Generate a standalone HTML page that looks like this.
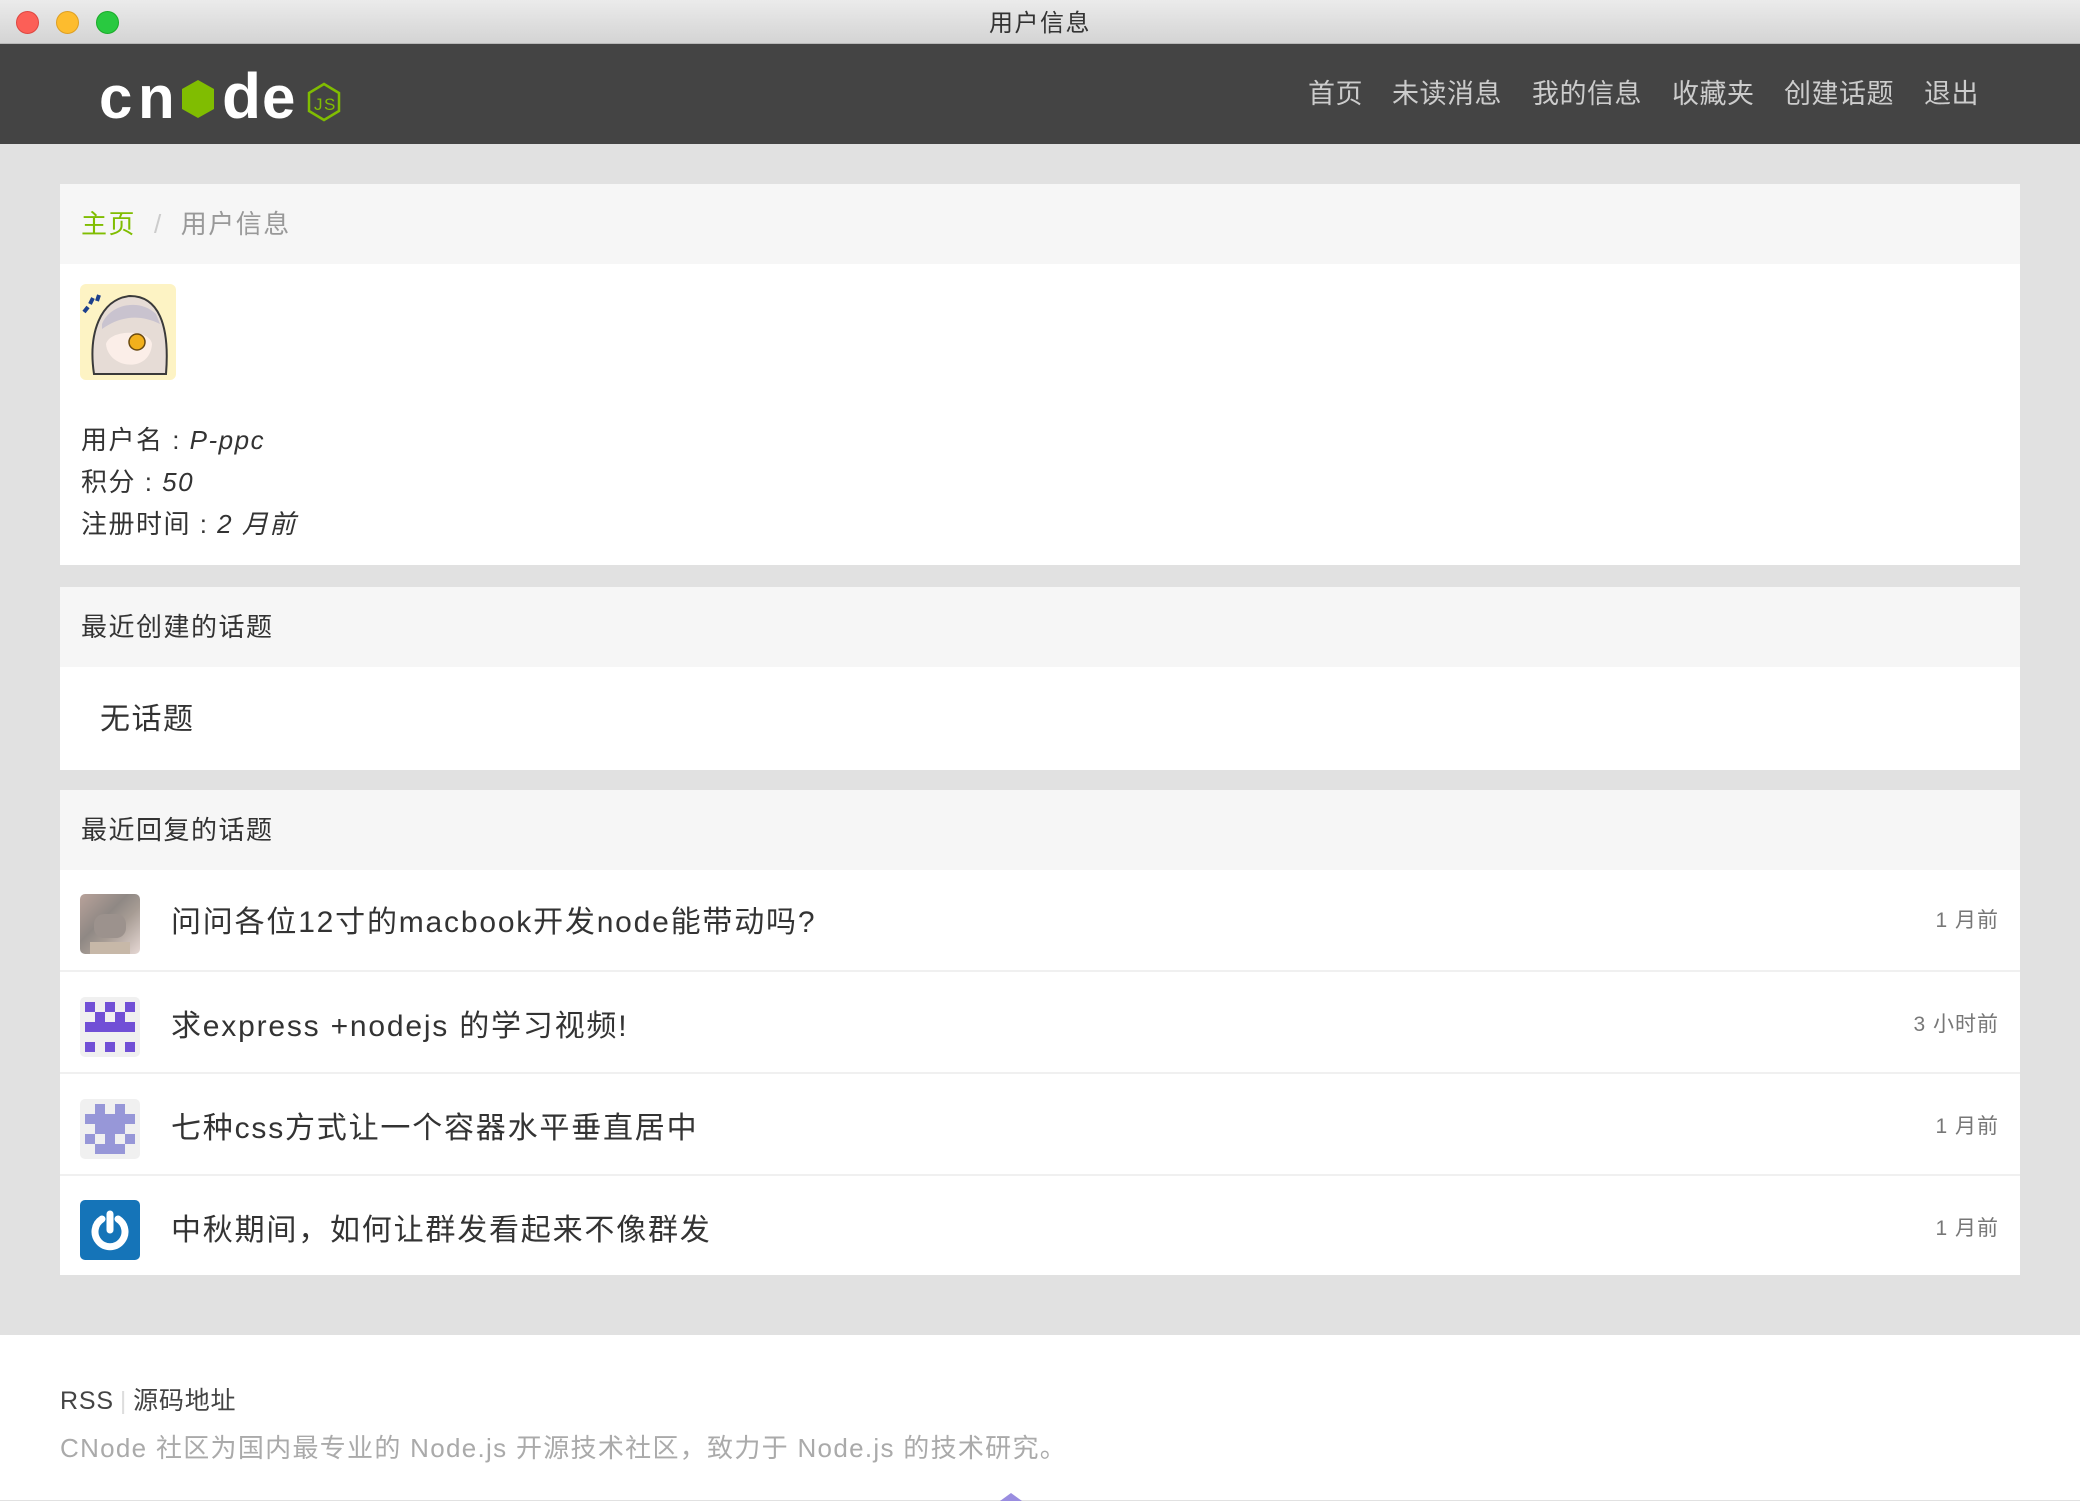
<!DOCTYPE html>
<html><head><meta charset="utf-8">
<style>
*{margin:0;padding:0;box-sizing:border-box}
body{width:2080px;height:1500px;background:#e1e1e1;font-family:"Liberation Sans","Noto Sans CJK SC",sans-serif;color:#333;position:relative;overflow:hidden;letter-spacing:1.5px}
.abs{position:absolute}
.tb{left:0;top:0;width:2080px;height:44px;background:linear-gradient(#ebebeb,#d4d4d4);border-bottom:1px solid #b8b8b8}
.dot{top:11px;width:23px;height:23px;border-radius:50%}
.hdr{left:0;top:44px;width:2080px;height:100px;background:#444}
.nav{top:74px;font-size:27px;color:#ccc;line-height:40px;white-space:nowrap;letter-spacing:0.5px}
.panel{left:60px;width:1960px;background:#fff}
.ph{left:0;top:0;width:100%;height:80px;background:#f6f6f6;font-size:26px;line-height:80px;padding-left:21px}
.row{left:0;width:100%;height:102px;border-top:2px solid #f0f0f0}
.row .t{left:111px;top:5px;line-height:100px;font-size:30px;color:#333;white-space:nowrap;letter-spacing:1.8px}
.row .tm{right:21px;top:3px;line-height:100px;font-size:21px;color:#777;letter-spacing:1px}
.av{left:20px;top:22px;width:60px;height:60px;border-radius:5px;overflow:hidden}
.c{position:absolute;width:10px;height:10px}
</style></head><body>
<div class="abs tb"></div>
<div class="abs dot" style="left:16px;background:#fc5f57;border:1px solid #de4640"></div>
<div class="abs dot" style="left:56px;background:#fdbc2e;border:1px solid #de9f22"></div>
<div class="abs dot" style="left:96px;background:#29c940;border:1px solid #1aab29"></div>
<div class="abs" style="left:0;top:2px;width:2080px;text-align:center;line-height:44px;font-size:24px;color:#333">用户信息</div>

<div class="abs hdr"></div>
<svg class="abs" style="left:96px;top:58px" width="252" height="70" viewBox="0 0 252 70">
  <text x="3" y="60" font-family="Liberation Sans" font-weight="bold" font-size="60" fill="#fff">c</text>
  <text x="42" y="60" font-family="Liberation Sans" font-weight="bold" font-size="60" fill="#fff">n</text>
  <polygon points="102,22 118,31 118,51 102,60 86,51 86,31" fill="#80bd01"/>
  <text x="126" y="60" font-family="Liberation Sans" font-weight="bold" font-size="64" fill="#fff">d</text>
  <text x="166" y="60" font-family="Liberation Sans" font-weight="bold" font-size="60" fill="#fff">e</text>
  <polygon points="228,26 243,35 243,53 228,62 213,53 213,35" fill="none" stroke="#80bd01" stroke-width="2.5"/>
  <text x="218" y="52" font-family="Liberation Sans" font-size="17" fill="#80bd01">JS</text>
</svg>
<div class="abs nav" style="left:1308px">首页</div>
<div class="abs nav" style="left:1392px">未读消息</div>
<div class="abs nav" style="left:1532px">我的信息</div>
<div class="abs nav" style="left:1672px">收藏夹</div>
<div class="abs nav" style="left:1784px">创建话题</div>
<div class="abs nav" style="left:1924px">退出</div>

<div class="abs panel" style="top:184px;height:381px">
  <div class="abs ph"><span style="color:#80bd01">主页</span><span style="color:#ccc;padding:0 18px">/</span><span style="color:#999">用户信息</span></div>
  <svg class="abs" style="left:20px;top:100px" width="96" height="96" viewBox="0 0 96 96">
    <rect width="96" height="96" rx="6" fill="#fdf3c4"/>
    <path d="M14 90 C8 50 20 15 50 12 C78 12 90 40 86 90 Z" fill="#e6dcd6" stroke="#3a3a3a" stroke-width="2"/>
    <path d="M22 40 C30 20 60 14 76 30 L80 40 C60 30 40 32 22 45Z" fill="#c9c3cf"/>
    <path d="M26 60 C28 85 70 90 72 60 C70 45 30 45 26 60Z" fill="#fbeee8"/>
    <circle cx="57" cy="58" r="8" fill="#f2b01c" stroke="#6a4a10" stroke-width="1.5"/>
    <path d="M4 28 l4 -5 M10 20 l3 -6 M17 17 l2 -6" stroke="#1c3f8c" stroke-width="4"/>
  </svg>
  <div class="abs" style="left:21px;top:235px;font-size:26px;line-height:42px">用户名 : <i>P-ppc</i><br>积分 : <i>50</i><br>注册时间 : <i>2 月前</i></div>
</div>

<div class="abs panel" style="top:587px;height:183px">
  <div class="abs ph">最近创建的话题</div>
  <div class="abs" style="left:40px;top:82px;line-height:102px;font-size:30px">无话题</div>
</div>

<div class="abs panel" style="top:790px;height:485px">
  <div class="abs ph">最近回复的话题</div>
  <div class="abs row" style="top:78px;border-top:none">
    <div class="abs av" style="top:26px;background:linear-gradient(135deg,#b8a29a,#8f8884 40%,#a79c94 60%,#e6d8d4)">
      <div class="c" style="left:14px;top:20px;width:32px;height:24px;border-radius:10px;background:#9c928d"></div>
      <div class="c" style="left:10px;top:48px;width:40px;height:12px;background:#c7b8a8"></div>
    </div>
    <div class="abs t">问问各位12寸的macbook开发node能带动吗?</div><div class="abs tm">1 月前</div>
  </div>
  <div class="abs row" style="top:180px">
    <div class="abs av" style="top:25px;background:#f0f0f0">
      <div class="c" style="left:5px;top:5px;background:#7150d6"></div><div class="c" style="left:25px;top:5px;background:#7150d6"></div><div class="c" style="left:45px;top:5px;background:#7150d6"></div>
      <div class="c" style="left:15px;top:15px;background:#7150d6"></div><div class="c" style="left:35px;top:15px;background:#7150d6"></div>
      <div class="c" style="left:5px;top:25px;width:50px;background:#7150d6"></div>
      <div class="c" style="left:5px;top:45px;background:#7150d6"></div><div class="c" style="left:25px;top:45px;background:#7150d6"></div><div class="c" style="left:45px;top:45px;background:#7150d6"></div>
    </div>
    <div class="abs t">求express +nodejs 的学习视频!</div><div class="abs tm">3 小时前</div>
  </div>
  <div class="abs row" style="top:282px">
    <div class="abs av" style="top:25px;background:#f0f0f0">
      <div class="c" style="left:15px;top:5px;background:#9797d8"></div><div class="c" style="left:35px;top:5px;background:#9797d8"></div>
      <div class="c" style="left:5px;top:15px;width:50px;background:#9797d8"></div>
      <div class="c" style="left:15px;top:25px;width:30px;background:#9797d8"></div>
      <div class="c" style="left:5px;top:35px;background:#9797d8"></div><div class="c" style="left:25px;top:35px;background:#9797d8"></div><div class="c" style="left:45px;top:35px;background:#9797d8"></div>
      <div class="c" style="left:15px;top:45px;width:30px;background:#9797d8"></div>
    </div>
    <div class="abs t">七种css方式让一个容器水平垂直居中</div><div class="abs tm">1 月前</div>
  </div>
  <div class="abs row" style="top:384px">
    <div class="abs av" style="top:24px;background:#1574b8">
      <svg width="60" height="60" viewBox="0 0 60 60"><path d="M22 19 A15 15 0 1 0 38 19" fill="none" stroke="#fff" stroke-width="7" stroke-linecap="round"/><line x1="30" y1="14" x2="30" y2="30" stroke="#fff" stroke-width="7" stroke-linecap="round"/></svg>
    </div>
    <div class="abs t">中秋期间，如何让群发看起来不像群发</div><div class="abs tm">1 月前</div>
  </div>
</div>

<div class="abs" style="left:0;top:1335px;width:2080px;height:165px;background:#fff"></div>
<div class="abs" style="left:60px;top:1383px;font-size:25px;line-height:36px;color:#444;letter-spacing:0.8px">RSS<span style="color:#ddd;padding:0 6px">|</span>源码地址</div>
<div class="abs" style="left:60px;top:1430px;font-size:26px;line-height:36px;color:#aaa;white-space:nowrap;letter-spacing:1.3px">CNode 社区为国内最专业的 Node.js 开源技术社区，致力于 Node.js 的技术研究。</div>
<div class="abs" style="left:1000px;top:1493px;width:0;height:0;border-left:11px solid transparent;border-right:11px solid transparent;border-bottom:8px solid #9a8de0"></div>
</body></html>
